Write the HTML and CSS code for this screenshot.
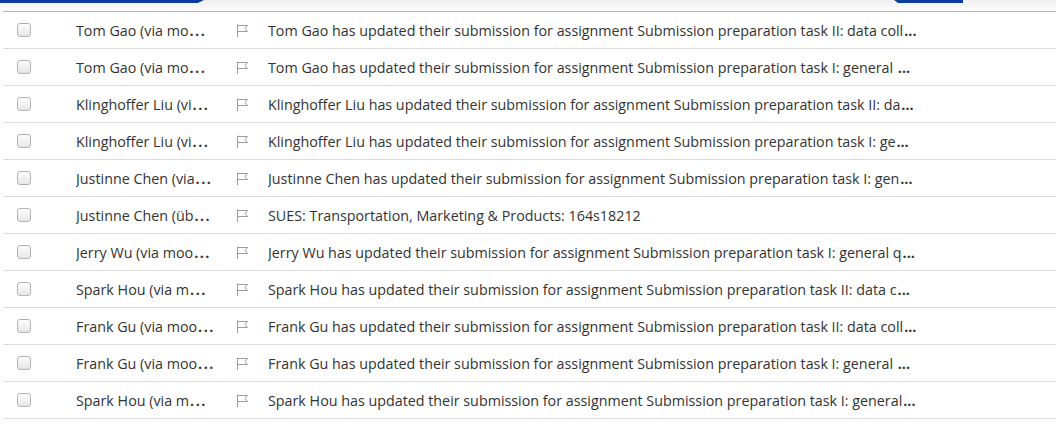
FILE: index.html
```html
<!DOCTYPE html>
<html>
<head>
<meta charset="utf-8">
<link rel="stylesheet" href="styles.css">
</head>
<body>
<div class="topbar">
  <div class="tab tab-left"></div>
  <div class="spacer"></div>
  <div class="tab tab-right"></div>
  <div class="tail"></div>
</div>
<div class="list">
  <div class="row"><span class="cb"></span><span class="from">Tom Gao (via mo<b class="dots">...</b></span><svg class="flag" viewBox="0 0 13 13"><path d="M1.5 0.5v12.5M1.5 1.5h10l-2.5 3 2.5 3h-10"/></svg><span class="subj">Tom Gao has updated their submission for assignment Submission preparation task II: data coll<b class="dots">...</b></span></div>
  <div class="row"><span class="cb"></span><span class="from">Tom Gao (via mo<b class="dots">...</b></span><svg class="flag" viewBox="0 0 13 13"><path d="M1.5 0.5v12.5M1.5 1.5h10l-2.5 3 2.5 3h-10"/></svg><span class="subj">Tom Gao has updated their submission for assignment Submission preparation task I: general <b class="dots">...</b></span></div>
  <div class="row"><span class="cb"></span><span class="from">Klinghoffer Liu (vi<b class="dots">...</b></span><svg class="flag" viewBox="0 0 13 13"><path d="M1.5 0.5v12.5M1.5 1.5h10l-2.5 3 2.5 3h-10"/></svg><span class="subj">Klinghoffer Liu has updated their submission for assignment Submission preparation task II: da<b class="dots">...</b></span></div>
  <div class="row"><span class="cb"></span><span class="from">Klinghoffer Liu (vi<b class="dots">...</b></span><svg class="flag" viewBox="0 0 13 13"><path d="M1.5 0.5v12.5M1.5 1.5h10l-2.5 3 2.5 3h-10"/></svg><span class="subj">Klinghoffer Liu has updated their submission for assignment Submission preparation task I: ge<b class="dots">...</b></span></div>
  <div class="row"><span class="cb"></span><span class="from">Justinne Chen (via<b class="dots">...</b></span><svg class="flag" viewBox="0 0 13 13"><path d="M1.5 0.5v12.5M1.5 1.5h10l-2.5 3 2.5 3h-10"/></svg><span class="subj">Justinne Chen has updated their submission for assignment Submission preparation task I: gen<b class="dots">...</b></span></div>
  <div class="row"><span class="cb"></span><span class="from">Justinne Chen (üb<b class="dots">...</b></span><svg class="flag" viewBox="0 0 13 13"><path d="M1.5 0.5v12.5M1.5 1.5h10l-2.5 3 2.5 3h-10"/></svg><span class="subj">SUES: Transportation, Marketing &amp; Products: 164s18212</span></div>
  <div class="row"><span class="cb"></span><span class="from">Jerry Wu (via moo<b class="dots">...</b></span><svg class="flag" viewBox="0 0 13 13"><path d="M1.5 0.5v12.5M1.5 1.5h10l-2.5 3 2.5 3h-10"/></svg><span class="subj">Jerry Wu has updated their submission for assignment Submission preparation task I: general q<b class="dots">...</b></span></div>
  <div class="row"><span class="cb"></span><span class="from">Spark Hou (via m<b class="dots">...</b></span><svg class="flag" viewBox="0 0 13 13"><path d="M1.5 0.5v12.5M1.5 1.5h10l-2.5 3 2.5 3h-10"/></svg><span class="subj">Spark Hou has updated their submission for assignment Submission preparation task II: data c<b class="dots">...</b></span></div>
  <div class="row"><span class="cb"></span><span class="from">Frank Gu (via moo<b class="dots">...</b></span><svg class="flag" viewBox="0 0 13 13"><path d="M1.5 0.5v12.5M1.5 1.5h10l-2.5 3 2.5 3h-10"/></svg><span class="subj">Frank Gu has updated their submission for assignment Submission preparation task II: data coll<b class="dots">...</b></span></div>
  <div class="row"><span class="cb"></span><span class="from">Frank Gu (via moo<b class="dots">...</b></span><svg class="flag" viewBox="0 0 13 13"><path d="M1.5 0.5v12.5M1.5 1.5h10l-2.5 3 2.5 3h-10"/></svg><span class="subj">Frank Gu has updated their submission for assignment Submission preparation task I: general <b class="dots">...</b></span></div>
  <div class="row"><span class="cb"></span><span class="from">Spark Hou (via m<b class="dots">...</b></span><svg class="flag" viewBox="0 0 13 13"><path d="M1.5 0.5v12.5M1.5 1.5h10l-2.5 3 2.5 3h-10"/></svg><span class="subj">Spark Hou has updated their submission for assignment Submission preparation task I: general<b class="dots">...</b></span></div>
</div>
</body>
</html>
```

FILE: styles.css
```css
html, body {
  margin: 0;
  padding: 0;
  background: #fff;
}
body {
  font-family: "Open Sans", "Noto Sans", sans-serif;
  font-size: 14.3px;
  color: #333;
}
.topbar {
  display: flex;
  height: 11px;
  background: linear-gradient(#f0f0f0, #f8f8f8 70%, #fdfdfd);
}
.tab {
  height: 3px;
  background: #0b3c9e;
}
.tab-left {
  width: 204px;
  clip-path: polygon(0 0, 100% 0, 97% 100%, 0 100%);
}
.spacer {
  width: 690px;
}
.tab-right {
  width: 69px;
  clip-path: polygon(0 0, 100% 0, 100% 100%, 6% 100%);
}
.list {
  margin-left: 3px;
  border-top: 1px solid #aab9c1;
}
.row {
  display: flex;
  align-items: center;
  height: 36px;
  border-bottom: 1px solid #dcdcdc;
  white-space: nowrap;
}
.cb {
  box-sizing: border-box;
  width: 14px;
  height: 14px;
  margin-left: 14px;
  border: 1px solid #b4b4b4;
  border-radius: 3px;
  background: linear-gradient(#fdfdfd, #e6e6e6);
  flex: none;
}
.from {
  width: 150px;
  margin-left: 45px;
  overflow: hidden;
  flex: none;
}
.from .dots {
  letter-spacing: 1.5px;
}
.dots {
  font-weight: 700;
  margin-left: 1px;
}
.flag {
  width: 13px;
  height: 13px;
  margin-left: 10px;
  flex: none;
}
.flag path {
  fill: none;
  stroke: #9c9c9c;
  stroke-width: 1;
}
.subj {
  margin-left: 19px;
  overflow: hidden;
}
```
